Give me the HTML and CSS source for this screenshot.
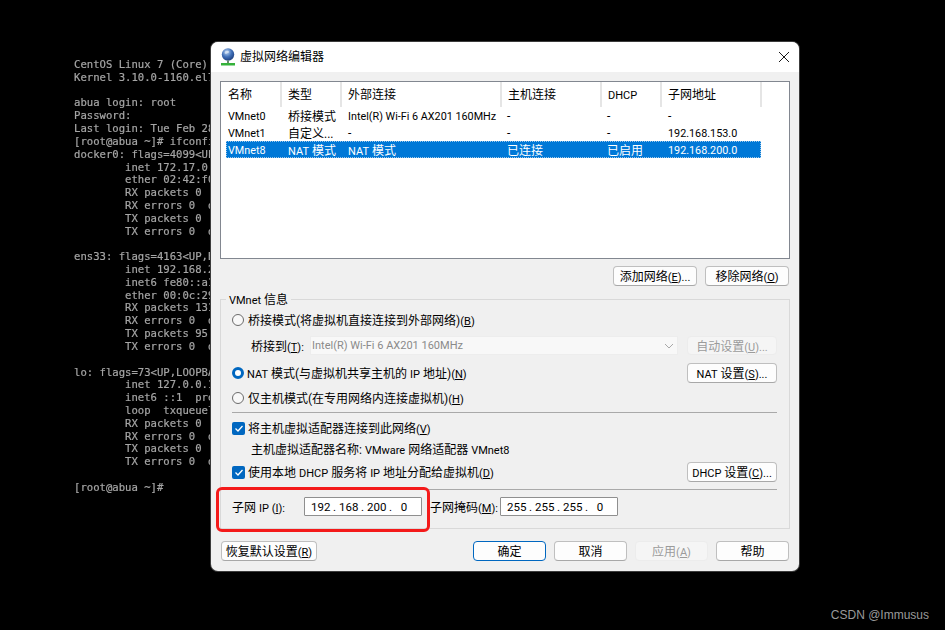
FILE: index.html
```html
<!DOCTYPE html>
<html lang="zh-CN">
<head>
<meta charset="utf-8">
<title>虚拟网络编辑器</title>
<link rel="stylesheet" href="styles.css">
</head>
<body>
<pre class="terminal">CentOS Linux 7 (Core)
Kernel 3.10.0-1160.el7.x86_64 on an x86_64

abua login: root
Password:
Last login: Tue Feb 28 10:21:07 2023
[root@abua ~]# ifconfig
docker0: flags=4099&lt;UP,BROADCAST,MULTICAST&gt;
        inet 172.17.0.1
        ether 02:42:f0:11
        RX packets 0
        RX errors 0  dropped 0
        TX packets 0
        TX errors 0  dropped 0

ens33: flags=4163&lt;UP,BROADCAST&gt;
        inet 192.168.200.1
        inet6 fe80::a1
        ether 00:0c:29:11
        RX packets 131
        RX errors 0  dropped 0
        TX packets 95
        TX errors 0  dropped 0

lo: flags=73&lt;UP,LOOPBACK,RUNNING&gt;
        inet 127.0.0.1
        inet6 ::1  prefixlen 128
        loop  txqueuelen 1000
        RX packets 0
        RX errors 0  dropped 0
        TX packets 0
        TX errors 0  dropped 0

[root@abua ~]#</pre>

<div class="dialog">
  <header class="titlebar">
    <svg class="app-icon" viewBox="0 0 16 18" width="16" height="18">
      <defs>
        <radialGradient id="globe" cx="0.4" cy="0.3" r="0.8">
          <stop offset="0" stop-color="#b9d3f2"/>
          <stop offset="0.5" stop-color="#3f6fb8"/>
          <stop offset="1" stop-color="#16336f"/>
        </radialGradient>
      </defs>
      <circle cx="8" cy="6.5" r="6.2" fill="url(#globe)"/>
      <path d="M5 3.5c1.500-1 3-1 4 0 .5 1-1 1.500-2 2-1 .5-2 .5-2.300-.5z" fill="#dfe9f7" opacity=".75"/>
      <rect x="7" y="12.500" width="2" height="2.500" fill="#6a8a6a"/>
      <rect x="1" y="15" width="14" height="2.500" fill="#35b23a"/>
    </svg>
    <h1 class="title">虚拟网络编辑器</h1>
    <svg class="close" viewBox="0 0 10 10" width="10" height="10">
      <path d="M0 0L10 10M10 0L0 10" stroke="#1a1a1a" stroke-width="1" fill="none"/>
    </svg>
  </header>

  <div class="body">
    <div class="listbox">
      <div class="list-head">
        <span>名称</span><span>类型</span><span>外部连接</span><span>主机连接</span><span class="lat">DHCP</span><span>子网地址</span>
      </div>
      <div class="list-row">
        <span class="lat">VMnet0</span><span>桥接模式</span><span class="lat">Intel(R) Wi-Fi 6 AX201 160MHz</span><span>-</span><span>-</span><span>-</span>
      </div>
      <div class="list-row">
        <span class="lat">VMnet1</span><span>自定义...</span><span>-</span><span>-</span><span>-</span><span class="lat">192.168.153.0</span>
      </div>
      <div class="list-row selected">
        <span class="lat">VMnet8</span><span><i class="lat">NAT</i> 模式</span><span><i class="lat">NAT</i> 模式</span><span>已连接</span><span>已启用</span><span class="lat">192.168.200.0</span>
      </div>
    </div>

    <div class="list-actions">
      <button class="btn btn-list">添加网络<i class="lat">(<u>E</u>)...</i></button>
      <button class="btn btn-list">移除网络<i class="lat">(<u>O</u>)</i></button>
    </div>

    <section class="group">
      <div class="legend"><i class="lat">VMnet</i> 信息</div>

      <div class="row row-bridge">
        <span class="radio"></span><span class="label">桥接模式(将虚拟机直接连接到外部网络)<i class="lat">(<u>B</u>)</i></span>
      </div>
      <div class="row row-select">
        <span class="bridge-label">桥接到<i class="lat">(<u>T</u>):</i></span>
        <div class="select">
          <span class="lat">Intel(R) Wi-Fi 6 AX201 160MHz</span>
          <svg viewBox="0 0 10 6" width="10" height="6"><path d="M1 1l4 4 4-4" stroke="#a8a8a8" fill="none"/></svg>
        </div>
        <button class="btn btn-side disabled">自动设置<i class="lat">(<u>U</u>)...</i></button>
      </div>
      <div class="row row-nat">
        <span class="radio on"></span><span class="label label-nat"><i class="lat">NAT</i> 模式(与虚拟机共享主机的 <i class="lat">IP</i> 地址)<i class="lat">(<u>N</u>)</i></span>
        <button class="btn btn-side"><i class="lat">NAT</i> 设置<i class="lat">(<u>S</u>)...</i></button>
      </div>
      <div class="row row-host">
        <span class="radio"></span><span class="label">仅主机模式(在专用网络内连接虚拟机)<i class="lat">(<u>H</u>)</i></span>
      </div>

      <hr class="sep sep-a">

      <div class="row row-check1">
        <span class="check"><svg viewBox="0 0 12 12" width="12" height="12"><path d="M2.500 6.500l2.500 2.500 4.500-5" stroke="#fff" stroke-width="1.300" fill="none"/></svg></span>
        <span class="label label-check">将主机虚拟适配器连接到此网络<i class="lat">(<u>V</u>)</i></span>
      </div>
      <div class="row row-name"><span class="adapter">主机虚拟适配器名称: <i class="lat">VMware</i> 网络适配器 <i class="lat">VMnet8</i></span></div>
      <div class="row row-check2">
        <span class="check"><svg viewBox="0 0 12 12" width="12" height="12"><path d="M2.500 6.500l2.500 2.500 4.500-5" stroke="#fff" stroke-width="1.300" fill="none"/></svg></span>
        <span class="label label-check">使用本地 <i class="lat">DHCP</i> 服务将 <i class="lat">IP</i> 地址分配给虚拟机<i class="lat">(<u>D</u>)</i></span>
        <button class="btn btn-side"><i class="lat">DHCP</i> 设置<i class="lat">(<u>C</u>)...</i></button>
      </div>

      <hr class="sep sep-b">

      <div class="row row-ip">
        <span class="ip-label">子网 <i class="lat">IP (<u>I</u>):</i></span>
        <div class="ipbox"><span class="octet">192</span><span class="dot">.</span><span class="octet">168</span><span class="dot">.</span><span class="octet">200</span><span class="dot">.</span><span class="octet">0</span></div>
        <span class="mask-label">子网掩码<i class="lat">(<u>M</u>):</i></span>
        <div class="ipbox"><span class="octet">255</span><span class="dot">.</span><span class="octet">255</span><span class="dot">.</span><span class="octet">255</span><span class="dot">.</span><span class="octet">0</span></div>
      </div>
    </section>

    <div class="footer">
      <button class="btn btn-reset">恢复默认设置<i class="lat">(<u>R</u>)</i></button>
      <div class="footer-right">
        <button class="btn btn-foot primary">确定</button>
        <button class="btn btn-foot">取消</button>
        <button class="btn btn-foot disabled">应用<i class="lat">(<u>A</u>)</i></button>
        <button class="btn btn-foot">帮助</button>
      </div>
    </div>
  </div>
  <div class="redbox"></div>
</div>

<div class="watermark">CSDN @Immusus</div>
</body>
</html>
```

FILE: styles.css
```css
* { box-sizing: border-box; }
html, body { margin: 0; height: 100%; }
body {
  width: 945px;
  height: 630px;
  background: #000;
  overflow: hidden;
  position: relative;
  font-family: Roboto, "Noto Sans CJK SC", sans-serif;
  font-size: 12px;
  color: #000;
}
.lat {
  font-family: Roboto, sans-serif;
  font-size: 11px;
  font-style: normal;
}
.terminal {
  margin: 0;
  padding: 58px 0 0 74px;
  font-family: "DejaVu Sans Mono", monospace;
  font-size: 10.600px;
  line-height: 12.820px;
  color: #a6a6a6;
  white-space: pre;
  filter: blur(0.4px);
  -webkit-text-stroke: 0.2px #a6a6a6;
}
.dialog {
  position: absolute;
  left: 211px;
  top: 42px;
  width: 588px;
  height: 529px;
  background: #f0f0f0;
  border-radius: 7px;
  box-shadow: 0 0 0 1px #3c3c3c;
  overflow: hidden;
}
.titlebar {
  height: 30px;
  background: #fff;
  display: flex;
  align-items: center;
  padding-left: 9px;
}
.app-icon { flex: none; }
.title {
  margin: -4px 0 0 4px;
  font-size: 12px;
  font-weight: 400;
  flex: 1;
}
.close { margin-right: 10px; }
.body { padding: 9px 9px 0; }
.listbox {
  height: 178px;
  background: #fff;
  border: 1px solid #828790;
  width: 570px;
}
.list-head, .list-row {
  display: grid;
  grid-template-columns: 60px 60px 160px 100px 60px 100px;
  align-items: center;
  white-space: nowrap;
}
.list-head {
  height: 25px;
  margin-left: 1px;
}
.list-head span {
  height: 25px;
  line-height: 27px;
  padding-left: 6px;
  border-right: 2px solid #e5e5e5;
}
.list-row {
  height: 17px;
  margin-left: 5px;
  width: 535px;
  grid-template-columns: 55px 60px 160px 100px 60px 100px;
}
.list-row span {
  padding-left: 7px;
  overflow: hidden;
}
.list-row span.lat { padding-top: 1px; font-size: 10.800px; }
.list-row span:first-child { padding-left: 2px; }
.list-row span:nth-child(4),
.list-row span:nth-child(5) { padding-left: 6px; }
.list-row.selected {
  background: #0078d7;
  color: #fff;
  outline: 1px dotted #9cc7ea;
  outline-offset: -1px;
}
.btn {
  font: inherit;
  font-size: 12px;
  color: #000;
  padding: 0 0 2px;
  background: #fdfdfd;
  border: 1px solid #bfbfbf;
  border-bottom-color: #a8a8a8;
  border-radius: 4px;
  height: 20px;
  white-space: nowrap;
}
.btn.disabled {
  background: #f5f5f5;
  border-color: #ececec;
  color: #9b9b9b;
}
.btn.primary {
  border: 1.500px solid #0067c0;
}
.list-actions {
  display: flex;
  justify-content: flex-end;
  gap: 8px;
  margin-top: 7px;
  height: 20px;
  width: 569px;
}
.btn-list { width: 84px; }
.group {
  position: relative;
  width: 570px;
  height: 230px;
  margin-top: 13px;
  border: 1px solid #d9d9d9;
  padding: 0 12px 0 11px;
}
.legend {
  position: absolute;
  left: 5px;
  top: -7px;
  padding: 0 3px;
  background: #f0f0f0;
  line-height: 14px;
}
.row {
  display: flex;
  align-items: center;
  white-space: nowrap;
}
.label { margin: -2px 0 0 4px; flex: 1; }
.label-nat { margin-left: 3px; }
.label-check { margin-left: 3px; }
.adapter { margin-top: -2px; }
.radio {
  width: 12px;
  height: 12px;
  border-radius: 50%;
  border: 1px solid #6b6b6b;
  background: #f8f8f8;
  flex: none;
}
.radio.on {
  border: 3.500px solid #0067c0;
  background: #fff;
}
.check {
  width: 13px;
  height: 13px;
  border-radius: 2px;
  background: #0067c0;
  flex: none;
  display: flex;
  align-items: center;
  justify-content: center;
}
.btn-side { width: 90px; flex: none; }
.row-bridge { height: 20px; margin-top: 10px; }
.row-select { height: 19px; margin-top: 6px; }
.bridge-label { margin-left: 19px; width: 59px; flex: none; }
.select {
  width: 368px;
  height: 19px;
  background: #f8f8f8;
  border: 1px solid #ededed;
  color: #8a8a8a;
  display: flex;
  align-items: center;
  justify-content: space-between;
  padding: 0 3px 0 1px;
  margin-right: 9px;
  flex: none;
}
.row-select .btn-side { height: 19px; }
.row-nat { height: 20px; margin-top: 8px; }
.row-host { height: 20px; margin-top: 5px; }
.sep {
  margin: 0;
  border: 0;
  height: 1px;
  background: #a9a9a9;
}
.sep-a { margin-top: 4px; }
.row-check1 { height: 20px; margin-top: 5px; }
.row-name { height: 20px; margin-top: 1px; padding-left: 19px; }
.row-check2 { height: 20px; margin-top: 3px; }
.sep-b { margin-top: 7px; }
.row-ip { height: 19px; margin-top: 7px; }
.ip-label { width: 72px; flex: none; }
.mask-label { width: 70px; margin-left: 8px; flex: none; }
.ipbox {
  width: 118px;
  height: 19px;
  background: #fff;
  border: 1px solid #8f8f8f;
  border-radius: 1px;
  display: flex;
  align-items: center;
  padding-left: 6px;
  font-size: 11.500px;
  flex: none;
}
.octet { width: 18px; text-align: center; flex: none; }
.dot { width: 11px; margin-right: -1px; text-align: center; flex: none; }
.footer {
  display: flex;
  justify-content: space-between;
  margin-top: 12px;
  width: 570px;
  height: 20px;
  padding: 0 1px;
}
.btn-reset { width: 96px; }
.footer-right { display: flex; gap: 8px; }
.btn-foot { width: 73px; }
.redbox {
  position: absolute;
  left: 5px;
  top: 445px;
  width: 214px;
  height: 45px;
  border: 3.500px solid #f41a1a;
  border-radius: 6px;
}
.watermark {
  position: absolute;
  right: 16px;
  top: 608px;
  font-family: "Liberation Sans", sans-serif;
  font-size: 12px;
  color: #9a9a9a;
}
```
